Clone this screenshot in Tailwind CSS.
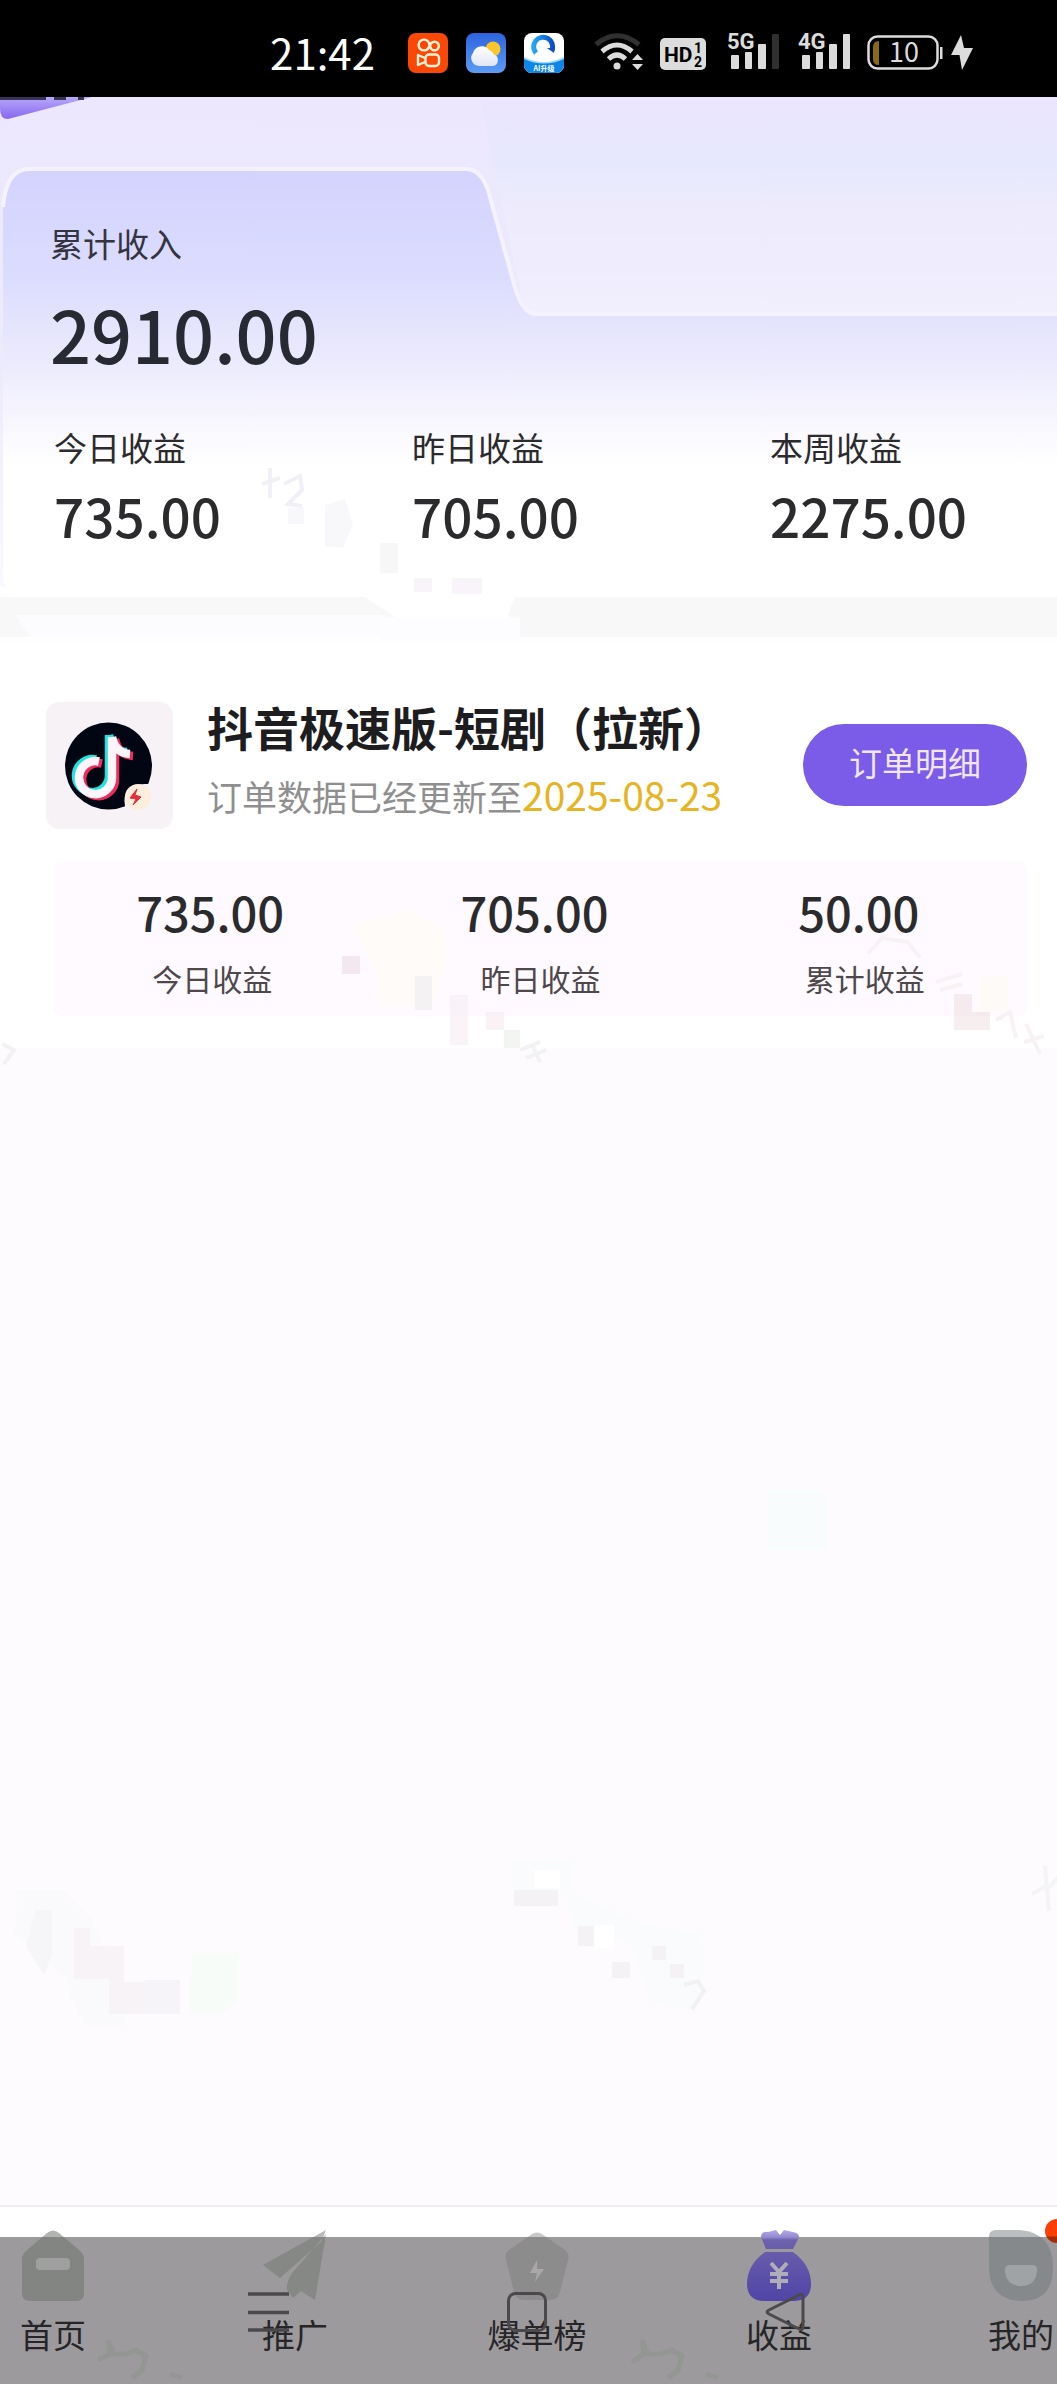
<!DOCTYPE html>
<html lang="zh-CN">
<head>
<meta charset="utf-8">
<meta name="viewport" content="width=device-width, initial-scale=1">
<title>收益</title>
<script src="https://cdn.jsdelivr.net/npm/@tailwindcss/browser@4"></script>
</head>
<body class="relative flex min-h-screen flex-col overflow-x-hidden bg-[#fdfbfe] font-['Noto_Sans_CJK_SC',sans-serif] text-[#2b2b2e]">

<!-- Status bar -->
<header class="flex h-[97px] shrink-0 items-center justify-end bg-black pr-[84px] pt-2 text-[#dcdcdc]">
  <time class="mr-[33px] pb-[2px] text-[42px] leading-[48px] text-white">21:42</time>
  <div class="mr-[30px] flex gap-[18px]">
    <svg class="size-10" viewBox="0 0 40 40" fill="none" stroke="#fff3d8" stroke-width="2.4"><rect width="40" height="40" rx="8" fill="#fb4806" stroke="none"/><circle cx="16" cy="12" r="5.4"/><circle cx="26.500" cy="13" r="4.300"/><rect x="17.500" y="21.500" width="13.500" height="11.500" rx="3.500"/><path d="M17 25l-7-3v10l7-3" stroke-linejoin="round"/></svg>
    <svg class="size-10" viewBox="0 0 40 40"><defs><linearGradient id="sky" x2="0" y2="1"><stop stop-color="#2d63de"/><stop offset="1" stop-color="#5c9df5"/></linearGradient><linearGradient id="cl" x2="0" y2="1"><stop stop-color="#fff"/><stop offset="1" stop-color="#dfe6f2"/></linearGradient></defs><rect width="40" height="40" rx="8" fill="url(#sky)"/><circle cx="27" cy="16" r="7.500" fill="#fbc62c"/><path d="M13 33a8 8 0 0 1-6-13 9 9 0 0 1 16-3 8 8 0 0 1 5 4.500 6 6 0 0 1-1 11.500z" fill="url(#cl)"/></svg>
    <svg class="size-10" viewBox="0 0 40 40"><defs><clipPath id="rc"><rect width="40" height="40" rx="8"/></clipPath><linearGradient id="rg"><stop stop-color="#27a6f5"/><stop offset="1" stop-color="#0a4fc4"/></linearGradient></defs><g clip-path="url(#rc)"><rect width="40" height="40" fill="#fff"/><path d="M0 24q20 10 40 0v16H0z" fill="#9bdcfb"/><path d="M0 26q20 9 40 0v14H0z" fill="#0d86e8"/><path d="M12 20a9.500 9.500 0 1 1 16-3" fill="none" stroke="url(#rg)" stroke-width="5"/><path d="M23 15h8l-1 5z" fill="#0a4fc4"/></g><text x="20" y="38" text-anchor="middle" font-size="7" font-weight="700" fill="#fff">AI升级</text></svg>
  </div>
  <svg class="mr-4 h-10 w-[50px]" viewBox="0 0 50 40" fill="none" stroke="currentColor" stroke-width="5"><path d="M2 11.500Q23-6 45 11.500" stroke="#303030"/><path d="M8 18.500q15-13 30 0M14.500 26q8.500-8 17 0"/><circle cx="23" cy="33" r="3.500" fill="currentColor" stroke="none"/><path d="M43.500 21l5.500 6H38zm0 16l5.500-6H38z" fill="currentColor" stroke="none"/></svg>
  <svg class="mr-[21px] h-10 w-[46px]" viewBox="0 0 46 40"><rect y="5" width="46" height="32" rx="5" fill="currentColor"/><g fill="#000" font-family="Roboto" font-weight="700"><text x="4" y="29" font-size="21">HD</text><text x="34" y="20" font-size="14">1</text><text x="34" y="34" font-size="14">2</text></g></svg>
  <svg class="mr-[19px] h-10 w-[52px] overflow-visible" viewBox="0 0 52 40" fill="currentColor"><text y="16" font-family="Roboto" font-size="22" font-weight="700">5G</text><rect x="4" y="22" width="8" height="14" rx="1"/><rect x="18" y="19" width="7" height="17" rx="1"/><rect x="31" y="11" width="8" height="25" rx="1"/><rect x="45" y="1" width="7" height="35" rx="1" fill="#303030"/></svg>
  <svg class="mr-[17px] h-10 w-[52px] overflow-visible" viewBox="0 0 52 40" fill="currentColor"><text y="16" font-family="Roboto" font-size="22" font-weight="700">4G</text><rect x="4" y="22" width="8" height="14" rx="1"/><rect x="18" y="19" width="7" height="17" rx="1"/><rect x="31" y="11" width="8" height="25" rx="1"/><rect x="45" y="1" width="7" height="35" rx="1"/></svg>
  <svg class="mr-2 h-10 w-[76px]" viewBox="0 0 76 40"><rect x="1.500" y="3.500" width="69" height="32" rx="9" fill="none" stroke="currentColor" stroke-width="2.500"/><path d="M12 8v24q-6 0-6-6V14q0-6 6-6z" fill="#8a6914"/><rect x="73" y="14" width="2.500" height="12" fill="currentColor"/><text x="37" y="29" text-anchor="middle" font-size="27" fill="currentColor">10</text></svg>
  <svg class="h-10 w-[22px]" viewBox="0 0 22 40" fill="currentColor"><path d="M10 2L0 22h8.500l2.500 15L22 15h-9z"/></svg>
</header>

<main class="flex-1">
  <!-- Income summary -->
  <section class="relative h-[547px] bg-linear-to-b from-[#ece7fd] via-[#edebfb] to-[#fdfcff]">
    <svg class="absolute inset-0 size-full" viewBox="0 0 1057 547" preserveAspectRatio="none">
      <defs>
        <linearGradient id="pan" gradientUnits="userSpaceOnUse" x1="0" y1="73" x2="0" y2="370"><stop stop-color="#d3d3fe"/><stop offset=".35" stop-color="#dbdcfe"/><stop offset=".6" stop-color="#e9e8fd"/><stop offset=".82" stop-color="#f6f5fe"/><stop offset="1" stop-color="#fff"/></linearGradient>
        <linearGradient id="blob" x2="0" y2="1"><stop stop-color="#b9a8fb"/><stop offset="1" stop-color="#8468ee"/></linearGradient>
        <linearGradient id="bg2" x2="0" y2="1"><stop stop-color="#ebe5fd"/><stop offset=".3" stop-color="#e6e8fd"/><stop offset=".5" stop-color="#edebfc"/><stop offset="1" stop-color="#f1effe"/></linearGradient>
        <linearGradient id="fade"><stop stop-color="#e6e8fd" stop-opacity="0"/><stop offset="1" stop-color="#e6e8fd"/></linearGradient>
      </defs>
      <path d="M480 0h577v218H525z" fill="url(#bg2)"/>
      <path d="M0 0h92L8 22q-8 0-8-10z" fill="url(#blob)"/>
      <path d="M0 0h46v3H0zM54 0h12v3H54zM78 0h6v3h-6z" fill="#3a3358"/>
      <path d="M0 490h1057v57H0z" fill="#fefdff"/>
      <path d="M0 500h1057v40H0z" fill="#f8f8f9"/>
      <path d="M15 518h370v22H30z" fill="#fcfbfd"/>
      <path d="M380 521q80-8 140 0v22H380z" fill="#fdfcfe"/>
      <path d="M3 110q3-38 26-38h437q18 0 25 32l23 83q8 30 22 30h521v283H515l-8 20H395l-30-20H20q-17-4-17-22z" fill="url(#pan)"/>
      <path d="M3 110q3-38 26-38h437q18 0 25 32l23 83q8 30 22 30h521" fill="none" stroke="#f5f2fe" stroke-width="4"/>
    </svg>
    <div class="relative px-[50px] pt-[122px]">
      <h2 class="text-[33px] leading-12 text-[#34343f]">累计收入</h2>
      <p class="mt-4 text-[72px] leading-[100px] font-medium text-[#282a33]">2910.00</p>
    </div>
    <dl class="relative mt-10 -mr-[71px] ml-[54px] grid grid-cols-3">
      <div><dt class="text-[33px] leading-12">今日收益</dt><dd class="mt-1 text-[53px] leading-[80px] font-medium">735.00</dd></div>
      <div><dt class="text-[33px] leading-12">昨日收益</dt><dd class="mt-1 text-[53px] leading-[80px] font-medium">705.00</dd></div>
      <div><dt class="text-[33px] leading-12">本周收益</dt><dd class="mt-1 text-[53px] leading-[80px] font-medium">2275.00</dd></div>
    </dl>
  </section>

  <!-- Project card -->
  <section class="bg-white px-[46px] pt-[50px] pb-8">
    <div class="-mr-4 flex items-center">
      <svg class="size-[127px] shrink-0" viewBox="0 0 127 127">
        <rect width="127" height="127" rx="14" fill="#f6f2f6"/>
        <circle cx="62.500" cy="64" r="43.500" fill="#020613"/>
        <g fill="none" stroke-width="8.500">
          <path d="M66 34v40a16.500 16.500 0 1 1-13-15.500M66 34q3 16 18 17" stroke="#1fe5e2" transform="translate(-3 -1)"/>
          <path d="M66 34v40a16.500 16.500 0 1 1-13-15.500M66 34q3 16 18 17" stroke="#ee2d5c" transform="translate(3 3)"/>
          <path d="M66 34v40a16.500 16.500 0 1 1-13-15.500M66 34q3 16 18 17" stroke="#fdf5fa" transform="translate(0 1)"/>
        </g>
        <path d="M79 104q-4-21 20-22h14v30H84z" fill="#f6f2f6"/>
        <circle cx="92" cy="95" r="13" fill="#fbeedd"/>
        <path d="M91 87l-7 9 6 1-3 6 8-8-6-2z" fill="#e3303c" stroke="#e3303c"/>
      </svg>
      <div class="ml-[34px] min-w-0 flex-1 pb-2 whitespace-nowrap">
        <h3 class="text-[46px] leading-[64px] font-bold text-[#1d1d1f]">抖音极速版-短剧（拉新）</h3>
        <p class="mt-1 text-[35px] leading-[64px] text-[#8f8f8f]">订单数据已经更新至<time class="text-[39px] text-[#e6b422]">2025-08-23</time></p>
      </div>
      <button type="button" class="h-[82px] w-[224px] shrink-0 rounded-full bg-[#7a5ce8] pb-1 text-[33px] text-[#f1e6fd]">订单明细</button>
    </div>
    <dl class="mt-[26px] -mr-[16px] ml-[8px] grid h-[154px] grid-cols-3 rounded-lg bg-[#fefaff] pt-[14px] text-center">
      <div class="flex flex-col-reverse justify-end"><dt class="pr-2 text-[30px] leading-11 text-[#4e484c]">今日收益</dt><dd class="mb-2 pr-3 text-[47px] leading-[72px] font-medium">735.00</dd></div>
      <div class="flex flex-col-reverse justify-end"><dt class="text-[30px] leading-11 text-[#4e484c]">昨日收益</dt><dd class="mb-2 pr-3 text-[47px] leading-[72px] font-medium">705.00</dd></div>
      <div class="flex flex-col-reverse justify-end"><dt class="text-[30px] leading-11 text-[#4e484c]">累计收益</dt><dd class="mb-2 pr-3 text-[47px] leading-[72px] font-medium">50.00</dd></div>
    </dl>
  </section>
</main>

<!-- Tab bar -->
<footer class="relative h-[179px] shrink-0 overflow-hidden border-t-2 border-[#f0eef2] bg-white">
  <div class="absolute inset-x-0 bottom-0 h-[147px] bg-[#9c9a9c]"></div>
  <nav class="relative -mr-[85px] -ml-[68px] grid grid-cols-5 pt-[23px] text-[33px] leading-12 text-[#262527]">
    <a href="#" class="flex flex-col items-center gap-2">
      <svg class="h-[72px] w-16" viewBox="0 0 64 72"><path d="M26 3q6-5 12 0l20 17q5 4 5 9v34q0 8-8 8H9q-8 0-8-8V29q0-5 5-9z" fill="#6f756d" fill-opacity=".55"/><rect x="15" y="28" width="34" height="12" rx="4" fill="#a09fa0"/></svg>
      首页</a>
    <a href="#" class="flex flex-col items-center gap-2">
      <svg class="h-[72px] w-16" viewBox="0 0 64 72" fill="#6f756d" fill-opacity=".5"><path d="M63 0L0 35l17 13L58 12zM63 4L52 70 38 61l-8 7-6-8q-1-9 6-18z"/></svg>
      推广</a>
    <a href="#" class="flex flex-col items-center gap-2">
      <svg class="h-[72px] w-16" viewBox="0 0 64 72"><path d="M27 4q5-3 10 0l23 16q5 4 3 10l-8 32q-2 8-10 8H19q-8 0-10-8L1 30q-2-6 3-10z" fill="#777876" fill-opacity=".4"/><path d="M32 30l-7 13h7l-2 9 9-13h-7z" fill="#a9a7a9"/></svg>
      爆单榜</a>
    <a href="#" aria-current="page" class="flex flex-col items-center gap-2">
      <svg class="h-[72px] w-16" viewBox="0 0 64 72"><defs><linearGradient id="bag" x2="0" y2="1"><stop stop-color="#b3a8ea"/><stop offset=".1" stop-color="#958bd0"/><stop offset=".14" stop-color="#6d62ac"/><stop offset="1" stop-color="#5044a6"/></linearGradient></defs><path d="M14 7q0-6 7-5l8-2 4 5 4-5 9 2q6 1 6 5l-6 12H19zM18 22h28q18 13 18 32 0 17-18 17H18Q0 71 0 54q0-19 18-32z" fill="url(#bag)"/><path d="M24 33l8 9 8-9M32 42v17M23 44h18M23 51h18" fill="none" stroke="#b0adba" stroke-width="4"/></svg>
      收益</a>
    <a href="#" class="relative flex flex-col items-center gap-2">
      <svg class="h-[72px] w-16" viewBox="0 0 64 72"><path d="M7 0h24q33 3 33 37 0 34-31 34Q0 70 0 37V7q0-7 7-7z" fill="#6f787a" fill-opacity=".48"/><path d="M21 35h22q6 0 5 7-2 14-16 14T16 42q-1-7 5-7z" fill="#9fa3a5"/></svg>
      我的
      <span class="absolute -top-[11px] left-1/2 ml-6 size-6 rounded-full bg-linear-to-b from-[#fd3f06] from-70% to-[#a52c08] to-75%"></span></a>
  </nav>
  <!-- System navigation keys, drawn over the tabs -->
  <div class="pointer-events-none absolute inset-x-0 bottom-[52px] flex pl-[248px] text-[#4b494b]">
    <svg class="mr-[218px] h-10 w-[41px]" viewBox="0 0 41 40" fill="none" stroke="currentColor" stroke-width="3.500"><path d="M0 2h41M0 20.500h41M0 38h41"/></svg>
    <svg class="mr-[218px] h-10 w-10" viewBox="0 0 40 40" fill="none" stroke="currentColor" stroke-width="3"><rect x="1.500" y="1.500" width="37" height="37" rx="7"/></svg>
    <svg class="h-10 w-10" viewBox="0 0 40 40" fill="none" stroke="currentColor" stroke-width="3" stroke-linejoin="round"><path d="M38 5v30q0 4-4 2L4 22q-4-2 0-4L34 3q4-2 4 2z"/></svg>
  </div>
</footer>

<!-- Faint watermark traces -->
<svg class="pointer-events-none absolute top-0 left-0" width="1057" height="2384" viewBox="0 0 1057 2384" aria-hidden="true">
  <g fill="none" stroke="#f1f0f7" stroke-width="4"><path d="M270 468v30M262 484l18-6M284 484l16-8 2 14-14 14 14 2"/></g>
  <path d="M288 508h16v16h-16zM325 505l20-6 8 26-10 22h-18z" fill="#f8f8fb"/><path d="M380 543h18v30h-18z" fill="#f7f7f8"/><path d="M414 578h18v14h-18zM452 578h30v16h-30z" fill="#f9f4f9"/>
  <g opacity=".6"><path d="M342 956h18v18h-18z" fill="#eddde4"/><path d="M378 956h18v18h-18z" fill="#eae4ea"/><path d="M350 925l60-16 36 22v38l-14 38h-54v-32z" fill="#fefcf6"/><path d="M415 976h17v34h-17z" fill="#efedea"/><path d="M450 995h18v50h-18z" fill="#f7edf4"/><path d="M486 1012h18v18h-18z" fill="#f7eaf0"/><path d="M504 1030h16v18h-16z" fill="#e9efe6"/><path d="M954 994h18v18h18v18h-36z" fill="#f0e2e5"/><path d="M978 976h30v36h-30z" fill="#fefaf3"/></g>
  <path d="M868 954l14-16 26 4 12 16M936 982l26-8M940 990l22-6M996 1020l14-8 6 26M1026 1024l14 30M1024 1042l20-6" fill="none" stroke="#f9f2f5" stroke-width="4"/>
  <path d="M768 1490h54l6 10v50h-60z" fill="#f9fcfc"/>
  <path d="M17 1890h46l30 30 24 50 10 55h-44l-20-50-48-40z" fill="#fafafd"/><path d="M74 1928h16v18h34v36h21v32h-36v-35H74z" fill="#f8f3f7"/><path d="M35 1910h17v45l-8 20-18-28z" fill="#f6f6f8"/><path d="M145 1980h35v34h-35z" fill="#f6f4f8"/><path d="M192 1953h47v48l-17 12h-32z" fill="#f8fcf9"/>
  <path d="M512 1858h62v34l66 32 62 10 2 50-8 28-46-10-20-60-56-12-8-40h-54z" fill="#f9fbfd"/><path d="M534 1870h26v18h-26zM594 1925h20v24h-20z" fill="#fff"/><path d="M514 1890h44v16h-44zM578 1926h16v20h-16zM612 1962h18v16h-18zM652 1946h14v14h-14zM670 1964h14v14h-14z" fill="#f5f2f5"/><path d="M684 1985l14-4 6 10-12 18" fill="none" stroke="#f1f1f4" stroke-width="4"/>
  <path d="M1045 1866l4 45M1032 1894l14-8M1049 1888l8-10" fill="none" stroke="#f4f3f6" stroke-width="4"/>
  <path d="M2 1044l12 6-10 14M520 1050l20-8M526 1058l20-8M532 1044l8 18" fill="none" stroke="#f2f2f5" stroke-width="4"/>
  <path d="M98 2360l12-6-2-14 6 14 12 0 10-4 10 6-4 14-10 8M170 2374l12 4M632 2362l12-8-2-14 6 14 12 0 12-4 10 6-4 14-10 8M706 2374l12 4" fill="none" stroke="#939693" stroke-width="5"/>
</svg>
</body>
</html>
